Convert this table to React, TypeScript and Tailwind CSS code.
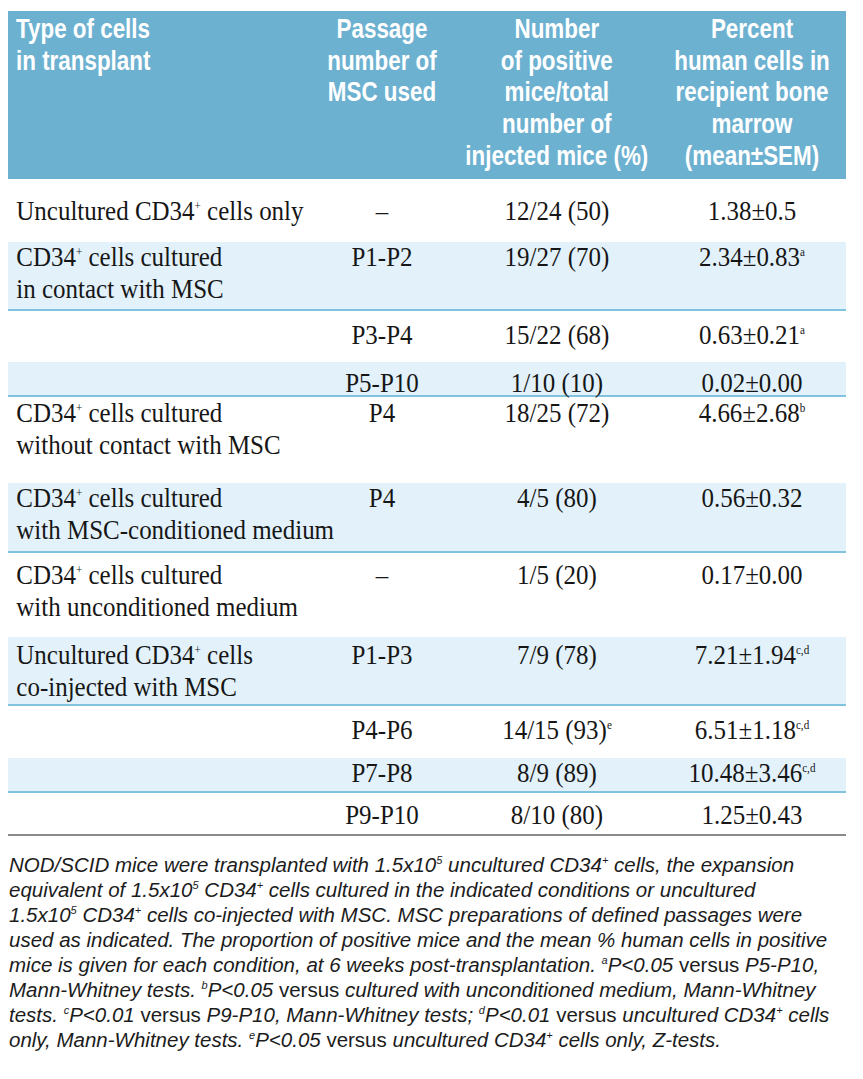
import type { ReactNode } from 'react';

/** Small raised mark used after CD34 and on the values. */
function Sup({ children }: { children: ReactNode }) {
  return <sup className="top-[-0.85em] text-[12px]">{children}</sup>;
}

function NoteSup({ children }: { children: ReactNode }) {
  return <sup className="top-[-0.7em] text-[11px]">{children}</sup>;
}

interface Row {
  type?: ReactNode;
  passage: string;
  mice: ReactNode;
  pct: ReactNode;
  shaded?: boolean;
  cls: string;
}

const cd34 = (
  <>
    CD34<Sup>+</Sup>
  </>
);

const rows: Row[] = [
  { type: <>Uncultured {cd34} cells only</>, passage: '–', mice: '12/24 (50)', pct: '1.38±0.5', cls: 'h-[63px] pt-[17px]' },
  {
    type: <>{cd34} cells cultured<br />in contact with MSC</>,
    passage: 'P1-P2',
    mice: '19/27 (70)',
    pct: <>2.34±0.83<Sup>a</Sup></>,
    shaded: true,
    cls: 'h-[69px] pt-0',
  },
  { passage: 'P3-P4', mice: '15/22 (68)', pct: <>0.63±0.21<Sup>a</Sup></>, cls: 'h-[51px] pt-[9px]' },
  { passage: 'P5-P10', mice: '1/10 (10)', pct: '0.02±0.00', shaded: true, cls: 'h-[35px] pt-[6px]' },
  {
    type: <>{cd34} cells cultured<br />without contact with MSC</>,
    passage: 'P4',
    mice: '18/25 (72)',
    pct: <>4.66±2.68<Sup>b</Sup></>,
    cls: 'h-[86px] pt-[1px]',
  },
  {
    type: <>{cd34} cells cultured<br />with MSC-conditioned medium</>,
    passage: 'P4',
    mice: '4/5 (80)',
    pct: '0.56±0.32',
    shaded: true,
    cls: 'h-[70px] pt-0',
  },
  {
    type: <>{cd34} cells cultured<br />with unconditioned medium</>,
    passage: '–',
    mice: '1/5 (20)',
    pct: '0.17±0.00',
    cls: 'h-[84px] pt-[7px]',
  },
  {
    type: <>Uncultured {cd34} cells<br />co-injected with MSC</>,
    passage: 'P1-P3',
    mice: '7/9 (78)',
    pct: <>7.21±1.94<Sup>c,d</Sup></>,
    shaded: true,
    cls: 'h-[69px] pt-[3px]',
  },
  { passage: 'P4-P6', mice: <>14/15 (93)<Sup>e</Sup></>, pct: <>6.51±1.18<Sup>c,d</Sup></>, cls: 'h-[52px] pt-[9px]' },
  { passage: 'P7-P8', mice: '8/9 (89)', pct: <>10.48±3.46<Sup>c,d</Sup></>, shaded: true, cls: 'h-[35px] pt-0' },
  { passage: 'P9-P10', mice: '8/10 (80)', pct: '1.25±0.43', cls: 'h-[41px] pt-[7px]' },
];

const V = () => <span className="not-italic">versus</span>;

export default function App() {
  return (
    <div className="min-h-[1079px] w-[863px] bg-white pt-[11px]">
      <div className="mx-2 w-[838px]">
        {/* Header band: bold sans squeezed to a condensed face */}
        <div className="grid h-[168px] grid-cols-[300px_148px_202px_188px] overflow-hidden bg-[#6db1d1] pt-[2px] font-['Liberation_Sans',sans-serif] text-[28px] font-bold leading-[31.7px] whitespace-nowrap text-white">
          <div>
            <div className="w-[375px] origin-top-left scale-x-[0.8] pl-[10px]">
              Type of cells
              <br />
              in transplant
            </div>
          </div>
          <div>
            <div className="w-[185px] origin-top-left scale-x-[0.8] text-center">
              Passage
              <br />
              number of
              <br />
              MSC used
            </div>
          </div>
          <div>
            <div className="w-[252px] origin-top-left scale-x-[0.8] text-center">
              Number
              <br />
              of positive
              <br />
              mice/total
              <br />
              number of
              <br />
              injected mice (%)
            </div>
          </div>
          <div>
            <div className="w-[235px] origin-top-left scale-x-[0.8] text-center">
              Percent
              <br />
              human cells in
              <br />
              recipient bone
              <br />
              marrow
              <br />
              (mean±SEM)
            </div>
          </div>
        </div>

        {/* Body rows */}
        <div className="border-b-2 border-[#8a8a8a] font-['Liberation_Serif',serif] text-[27px] leading-[31.5px] whitespace-nowrap text-[#161616]">
          {rows.map((r, i) => (
            <div
              key={i}
              className={`grid grid-cols-[300px_148px_202px_188px] ${r.cls} ${
                r.shaded ? 'border-b-2 border-[#80c3df] bg-[#e2f1fa]' : ''
              }`}
            >
              <div>
                <div className="w-[324px] origin-top-left scale-x-[0.925] pl-[9px]">{r.type}</div>
              </div>
              <div className="scale-x-[0.925] text-center">{r.passage}</div>
              <div className="scale-x-[0.925] text-center">{r.mice}</div>
              <div className="scale-x-[0.925] text-center">{r.pct}</div>
            </div>
          ))}
        </div>

        {/* Footnote */}
        <div className="mt-4 whitespace-nowrap pl-px font-['Liberation_Sans',sans-serif] text-[20.5px] italic leading-[25px] text-[#1c1c1c]">
          <div>
            NOD/SCID mice were transplanted with 1.5x10<NoteSup>5</NoteSup> uncultured CD34<NoteSup>+</NoteSup> cells, the expansion
          </div>
          <div>
            equivalent of 1.5x10<NoteSup>5</NoteSup> CD34<NoteSup>+</NoteSup> cells cultured in the indicated conditions or uncultured
          </div>
          <div>
            1.5x10<NoteSup>5</NoteSup> CD34<NoteSup>+</NoteSup> cells co-injected with MSC. MSC preparations of defined passages were
          </div>
          <div>used as indicated. The proportion of positive mice and the mean % human cells in positive</div>
          <div>
            mice is given for each condition, at 6 weeks post-transplantation. <NoteSup>a</NoteSup>P&lt;0.05 <V /> P5-P10,
          </div>
          <div>
            Mann-Whitney tests. <NoteSup>b</NoteSup>P&lt;0.05 <V /> cultured with unconditioned medium, Mann-Whitney
          </div>
          <div>
            tests. <NoteSup>c</NoteSup>P&lt;0.01 <V /> P9-P10, Mann-Whitney tests; <NoteSup>d</NoteSup>P&lt;0.01 <V /> uncultured CD34
            <NoteSup>+</NoteSup> cells
          </div>
          <div>
            only, Mann-Whitney tests. <NoteSup>e</NoteSup>P&lt;0.05 <V /> uncultured CD34<NoteSup>+</NoteSup> cells only, Z-tests.
          </div>
        </div>
      </div>
    </div>
  );
}
